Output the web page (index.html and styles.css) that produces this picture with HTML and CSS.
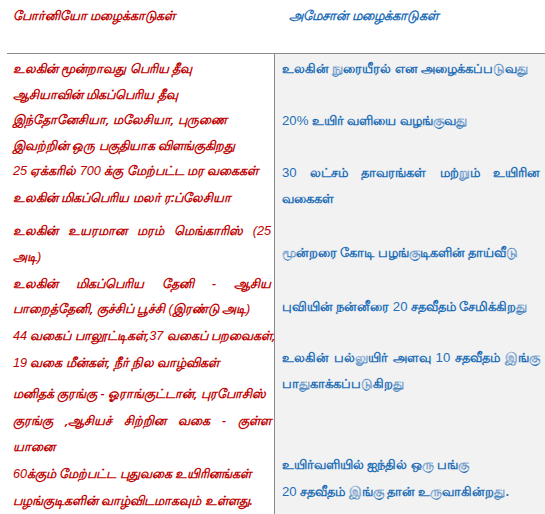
FILE: index.html
```html
<!DOCTYPE html>
<html lang="ta">
<head>
<meta charset="utf-8">
<link rel="stylesheet" href="styles.css">
</head>
<body>
<div class="table">
  <div class="head">
    <div class="hcell left">போர்னியோ மழைக்காடுகள்</div>
    <div class="hcell right">அமேசான் மழைக்காடுகள்</div>
  </div>
  <div class="body">
    <div class="col lcol">
      <div class="ln">உலகின் மூன்றாவது பெரிய தீவு</div>
      <div class="ln">ஆசியாவின் மிகப்பெரிய தீவு</div>
      <div class="ln">இந்தோனேசியா, மலேசியா, புருணை</div>
      <div class="ln">இவற்றின் ஒரு பகுதியாக விளங்குகிறது</div>
      <div class="ln"><span class="num">25</span> ஏக்கரில் <span class="num">700</span> க்கு மேற்பட்ட மர வகைகள்</div>
      <div class="ln">உலகின் மிகப்பெரிய மலர் ர:ப்லேசியா</div>
      <div class="ln j gap1">உலகின் உயரமான மரம் மெங்காரிஸ் <span class="num">(25</span></div>
      <div class="ln">அடி<span class="num">)</span></div>
      <div class="ln j">உலகின் மிகப்பெரிய தேனி - ஆசிய</div>
      <div class="ln">பாறைத்தேனி, குச்சிப் பூச்சி <span class="num">(</span>இரண்டு அடி<span class="num">)</span></div>
      <div class="ln"><span class="num">44</span> வகைப் பாலூட்டிகள்,<span class="num">37</span> வகைப் பறவைகள்,</div>
      <div class="ln"><span class="num">19</span> வகை மீன்கள், நீர் நில வாழ்விகள்</div>
      <div class="ln gap2">மனிதக் குரங்கு - ஓராங்குட்டான், புரபோசிஸ்</div>
      <div class="ln j tall">குரங்கு ,ஆசியச் சிற்றின வகை - குள்ள</div>
      <div class="ln tall">யானை</div>
      <div class="ln tall"><span class="num">60</span>க்கும் மேற்பட்ட புதுவகை உயிரினங்கள்</div>
      <div class="ln tall">பழங்குடிகளின் வாழ்விடமாகவும் உள்ளது.</div>
    </div>
    <div class="col rcol">
      <div class="ln">உலகின் நுரையீரல் என அழைக்கப்படுவது</div>
      <div class="ln p1"><span class="num">20%</span> உயிர் வளியை வழங்குவது</div>
      <div class="ln j p1"><span class="num">30</span> லட்சம் தாவரங்கள் மற்றும் உயிரின</div>
      <div class="ln">வகைகள்</div>
      <div class="ln p2">மூன்றரை கோடி பழங்குடிகளின் தாய்வீடு</div>
      <div class="ln p2">புவியின் நன்னீரை <span class="num">20</span> சதவீதம் சேமிக்கிறது</div>
      <div class="ln j p3">உலகின் பல்லுயிர் அளவு <span class="num">10</span> சதவீதம் இங்கு</div>
      <div class="ln">பாதுகாக்கப்படுகிறது</div>
      <div class="ln p4">உயிர்வளியில் ஐந்தில் ஒரு பங்கு</div>
      <div class="ln tall2"><span class="num">20</span> சதவீதம் இங்கு தான் உருவாகின்றது.</div>
    </div>
  </div>
</div>
</body>
</html>
```
FILE: styles.css
```css
html, body {
  margin: 0;
  padding: 0;
  background: #ffffff;
}
body {
  width: 545px;
  height: 514px;
  overflow: hidden;
  font-family: "Noto Sans", "Liberation Sans", sans-serif;
  font-size: 12.7px;
  font-weight: 600;
}
.table {
  display: flex;
  flex-direction: column;
  height: 514px;
}
.head {
  display: grid;
  grid-template-columns: 269px 1fr;
  height: 53px;
  margin-left: 7px;
  border-bottom: 1px solid #8a8a8a;
}
.hcell {
  padding-top: 6px;
  line-height: 18px;
  font-style: italic;
}
.hcell.left {
  color: #c00000;
  padding-left: 6px;
}
.hcell.right {
  color: #1f6fb8;
  padding-left: 13px;
  font-size: 13px;
}
.body {
  display: grid;
  grid-template-columns: 268px 1fr;
  margin-left: 7px;
  flex: 1;
}
.col {
  display: flex;
  flex-direction: column;
  padding-top: 2px;
}
.lcol {
  border-right: 1px solid #8a8a8a;
  color: #c00000;
  font-style: italic;
  padding-left: 6px;
  padding-right: 3px;
}
.rcol {
  background: #f2f2f2;
  color: #1f6fb8;
  font-size: 13.2px;
  padding-left: 7px;
  padding-right: 5px;
}
.ln {
  line-height: 25.6px;
  white-space: nowrap;
}
.ln.j {
  text-align: justify;
  text-align-last: justify;
  white-space: normal;
}
.num {
  font-weight: 400;
  font-family: "Liberation Sans", sans-serif;
}
.ln.tall { line-height: 26.4px; }
.gap1 { margin-top: 7px; }
.gap2 { margin-top: 5px; }
.rcol .p1 { margin-top: 26.4px; }
.rcol .p2 { margin-top: 28.6px; }
.rcol .p3 { margin-top: 25.4px; }
.rcol .p4 { margin-top: 56px; }
.rcol .tall2 { margin-top: 1.4px; }
```
